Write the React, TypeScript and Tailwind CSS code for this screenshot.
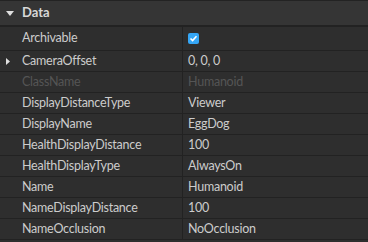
const rows: { name: string; value: string; expand?: boolean; disabled?: boolean; check?: boolean }[] = [
  { name: "Archivable", value: "", check: true },
  { name: "CameraOffset", value: "0, 0, 0", expand: true },
  { name: "ClassName", value: "Humanoid", disabled: true },
  { name: "DisplayDistanceType", value: "Viewer" },
  { name: "DisplayName", value: "EggDog" },
  { name: "HealthDisplayDistance", value: "100" },
  { name: "HealthDisplayType", value: "AlwaysOn" },
  { name: "Name", value: "Humanoid" },
  { name: "NameDisplayDistance", value: "100" },
  { name: "NameOcclusion", value: "NoOcclusion" },
];

function Check() {
  return (
    <div className="w-[11px] h-[11px] rounded-[2px] bg-[#35a6f5] flex items-center justify-center">
      <svg width="9" height="9" viewBox="0 0 9 9">
        <path d="M1.5 4.5 L3.6 6.5 L7.5 2.3" stroke="white" strokeWidth="1.6" fill="none" />
      </svg>
    </div>
  );
}

export default function App() {
  return (
    <div
      className="w-[368px] h-[242px] bg-[#2e2e2e] overflow-hidden text-[12.5px] tracking-[-0.25px] text-[#cccccc]"
      style={{ fontFamily: "Lato, 'Open Sans', sans-serif" }}
    >
      <div className="h-[27px] bg-[#353535] border-t border-[#232323] border-b-2 border-b-[#222222] flex items-center">
        <div className="w-[22px] flex justify-center pr-[2px]">
          <svg width="8" height="5" viewBox="0 0 8 5">
            <path d="M0 0 H8 L4 5 Z" fill="#e0e0e0" />
          </svg>
        </div>
        <span className="font-bold text-[#d8d8d8] text-[13px] tracking-normal">Data</span>
      </div>
      {rows.map((r, i) => (
        <div
          key={r.name}
          className={`flex border-b border-[#222222] ${i === 0 ? "h-[24px]" : "h-[21px]"}`}
        >
          <div className="w-[183px] border-r border-[#222222] flex items-center">
            <div className="w-[22px] flex justify-center pr-[6px]">
              {r.expand && (
                <svg width="4" height="7" viewBox="0 0 4 7">
                  <path d="M0 0 L4 3.5 L0 7 Z" fill="#e0e0e0" />
                </svg>
              )}
            </div>
            <span className={r.disabled ? "text-[#555555]" : ""}>{r.name}</span>
          </div>
          <div className="flex items-center pl-[5px]">
            {r.check ? <Check /> : <span className={r.disabled ? "text-[#555555]" : ""}>{r.value}</span>}
          </div>
        </div>
      ))}
    </div>
  );
}
